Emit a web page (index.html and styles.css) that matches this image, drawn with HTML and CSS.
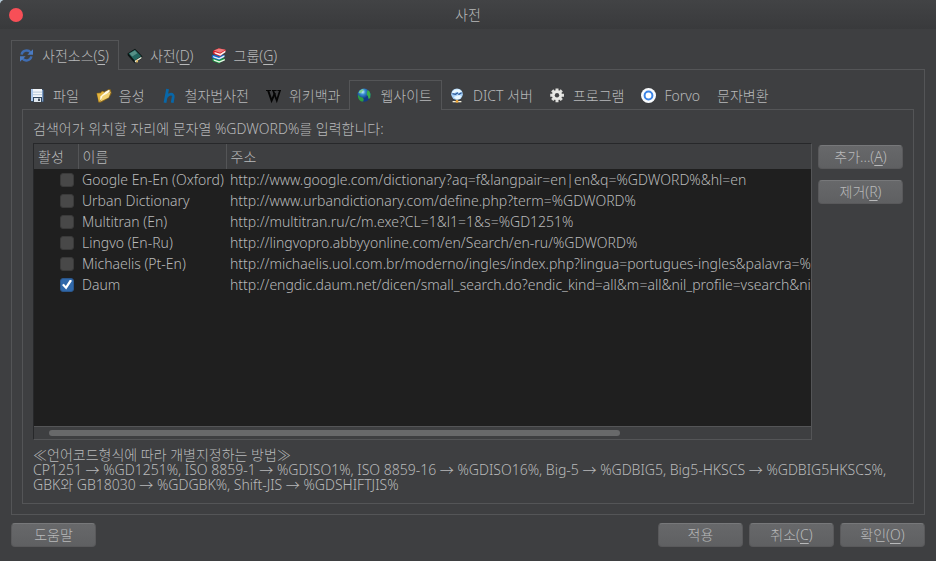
FILE: index.html
```html
<!DOCTYPE html>
<html lang="ko">
<head>
<meta charset="utf-8">
<title>사전</title>
<link rel="stylesheet" href="styles.css">
</head>
<body>
<main class="window">
  <header class="titlebar">
    <button class="close" type="button" aria-label="닫기"></button>
    <h1 class="title">사전</h1>
  </header>
  <div class="content">
    <nav class="tabs" role="tablist">
      <button class="tab active" type="button" role="tab" aria-selected="true">
        <svg class="icon" viewBox="0 0 16 16"><g fill="none" stroke="#3f6db3" stroke-width="2.4"><path d="M2.6 6.6C3.4 2 9.3 1.4 11.6 4.4"/><path d="M12.4 8.4C11.6 13 5.7 13.6 3.4 10.6"/></g><path d="M14 1.2v5.6H8.4z" fill="#4b7bc2"/><path d="M1 13.8V8.2h5.6z" fill="#4b7bc2"/></svg>
        <span>사전소스(<u>S</u>)</span>
      </button>
      <button class="tab" type="button" role="tab">
        <svg class="icon" viewBox="0 0 16 16"><path d="M.5 5.5 8 .8l7.3 7.4-.4 2.3L7.6 15 .8 7.6z" fill="#0b1413"/><path d="M1.6 5.6 8 1.8l6.2 6.4-6.6 4.2z" fill="#23665f"/><path d="M2.6 5.6 7.8 2.6l2.6 2.6-5.2 3.2z" fill="#569087"/><path d="m7.8 12.8 6.6-4 .2 1.4-6.6 4.2z" fill="#e9ecda"/><path d="m9.2 12.6 1.8-1.1v3.3l-1-.8-.8.9z" fill="#e0b860"/></svg>
        <span>사전(<u>D</u>)</span>
      </button>
      <button class="tab" type="button" role="tab">
        <svg class="icon" viewBox="0 0 16 16"><path d="M1.5 10.5 8 9.6l6 1.2v1L8 15.4l-6-2.2c-1-.8-1-2-.5-2.7z" fill="#12973d"/><path d="m2.5 11.2 5.7 2 5.6-2.2v1.5L8.2 14.8l-5.4-2z" fill="#e7f5e5"/><path d="M1 7.2 8 5.6l5.6 1.6v1L8 12.2l-6.4-2c-1-.8-1-2-.6-3z" fill="#1767c1"/><path d="m2 8 6 2.1 5.4-2.8v1.6L8.2 11.6l-5.8-2z" fill="#e3f2fc"/><path d="M2.5 2.5 7.8.3l7 1.4v1.1L9.3 8.6 3 6.2c-1.4-.8-1.5-2.6-.5-3.7z" fill="#d51e28"/><path d="M2.8 2.6 7.8.6l6.6 1.2-5.3 3z" fill="#f07b7c"/><path d="m3.4 4 5.8 1.8 5.2-3.2v1.7L9.3 7.8 3.8 5.6z" fill="#fff0ec"/></svg>
        <span>그룹(<u>G</u>)</span>
      </button>
    </nav>
    <section class="pane outer">
      <nav class="tabs inner-tabs" role="tablist">
        <button class="tab" type="button" role="tab">
          <svg class="icon" viewBox="0 0 16 16"><path d="M1 1h12l1 1v12H2l-1-1z" fill="#33485f"/><path d="M1 1h2v12H1z" fill="#a9c6ea"/><path d="M12 2h1.2v11.5H12z" fill="#7d9bc4"/><path d="M3 1h9v8H3z" fill="#f3f6fa"/><path d="M3 3.6h9v1.2H3zM3 6h9v1.2H3z" fill="#c3d2e0"/><path d="M4 10h7v4H4z" fill="#dfe7ee"/><path d="M8 10.6h2V13H8z" fill="#46515e"/></svg>
          <span>파일</span>
        </button>
        <button class="tab" type="button" role="tab">
          <svg class="icon" viewBox="0 0 16 16"><path d="m.4 5 4-.4L6 3l2 .4L13 1l1.8.6.8 4L13 10l-8 4.6-2.4.2z" fill="#8a661a"/><path d="m1 5.6 3.8-.4L6 3.6l2.4.4-4.6 9.6-1 .4z" fill="#e3b53f"/><path d="m4.4 8.4 5-4.6L13 1.8l1 1.2-6 7-4 2z" fill="#fffbe6"/><path d="M4 13.8 6.6 8l8.4-4.4-2.4 5.8z" fill="#f2d274"/></svg>
          <span>음성</span>
        </button>
        <button class="tab" type="button" role="tab">
          <svg class="icon" viewBox="0 0 16 16"><path d="M5.6 1 3 14.7M4.4 9C6.8 5.6 11.8 5 11.2 9l-1 5.7" fill="none" stroke="#0867a8" stroke-width="2.8"/></svg>
          <span>철자법사전</span>
        </button>
        <button class="tab" type="button" role="tab">
          <svg class="icon" viewBox="0 0 16 16"><path d="M0 2.5h5M6 2.5h4.6M11.4 2.5H15" stroke="#050505"/><path d="m2.2 2.6 3.4 10L9 5" fill="none" stroke="#050505" stroke-width="1.9"/><path d="m7.2 2.6 3.6 10 3.2-10" fill="none" stroke="#050505" stroke-width="1.7"/></svg>
          <span>위키백과</span>
        </button>
        <button class="tab active" type="button" role="tab" aria-selected="true">
          <svg class="icon" viewBox="0 0 16 16"><defs><radialGradient id="globe" cx=".4" cy=".25"><stop stop-color="#c8f3ff"/><stop offset=".4" stop-color="#388fd3"/><stop offset="1" stop-color="#123a89"/></radialGradient></defs><circle cx="7" cy="7.2" r="6.6" fill="url(#globe)"/><path d="M1.6 4.4 3 2.4 6 1l.6 1.2-1.4 1.6-2 1.6z" fill="#7fd08a"/><path d="M1 6.4 3 8.8l3 1 .8 1.6-.6 2.2C3 13.6.4 10.6 1 6.4z" fill="#2f9c3f"/><path d="m10.4 2.2 1.8.8 1.4 3-.4 4-1.6 1-.8-3-1.2-1.6z" fill="#3aac4c"/></svg>
          <span>웹사이트</span>
        </button>
        <button class="tab" type="button" role="tab">
          <svg class="icon" viewBox="0 0 16 16"><circle cx="7" cy="6.2" r="5.8" fill="#a5d0f8"/><path d="M2 4 4.6 1.6l4.4-.4 3 2.6-3 1-2.6-1L3 6zM3.6 9l5-2 3 1-2 3H6z" fill="#eaf8ff"/><path d="m2.4 5.6 3 .8 2.6-1.6M8.4 6.6l3.2-1.8" fill="none" stroke="#2c5796" stroke-width="1.3"/><path d="M6.3 11.6h1.4v2H6.3z" fill="#d8c8a0"/><path d="M2.6 13h8.8v1.3H2.6z" fill="#f4efdc"/><circle cx="7" cy="13.4" r="1.4" fill="#e9a133"/></svg>
          <span>DICT 서버</span>
        </button>
        <button class="tab" type="button" role="tab">
          <svg class="icon" viewBox="0 0 16 16"><g stroke="#dededb" stroke-width="3"><path d="M7 .4v13.8M.2 7.2H14M2.2 2.4l9.6 9.6M11.8 2.4 2.2 12"/></g><circle cx="7" cy="7.2" r="5" fill="#e8e8e5"/><circle cx="7" cy="7.2" r="2.2" fill="#434446"/></svg>
          <span>프로그램</span>
        </button>
        <button class="tab" type="button" role="tab">
          <svg class="icon" viewBox="0 0 16 16"><circle cx="7.5" cy="7.5" r="7.5" fill="#f9fbfd"/><circle cx="7.5" cy="7.5" r="3.9" fill="#fff" stroke="#3b84e6" stroke-width="2"/></svg>
          <span>Forvo</span>
        </button>
        <button class="tab" type="button" role="tab"><span>문자변환</span></button>
      </nav>
      <section class="pane inner">
        <p class="hint">검색어가 위치할 자리에 문자열 %GDWORD%를 입력합니다:</p>
        <div class="editor">
          <div class="list">
            <div class="viewport">
              <table class="sites">
                <colgroup><col class="c-on"><col class="c-name"><col></colgroup>
                <thead><tr><th>활성</th><th>이름</th><th>주소</th></tr></thead>
                <tbody>
                  <tr><td><input type="checkbox" aria-label="Google En-En (Oxford)"></td><td>Google En-En (Oxford)</td><td>http://www.google.com/dictionary?aq=f&amp;langpair=en|en&amp;q=%GDWORD%&amp;hl=en</td></tr>
                  <tr><td><input type="checkbox" aria-label="Urban Dictionary"></td><td>Urban Dictionary</td><td>http://www.urbandictionary.com/define.php?term=%GDWORD%</td></tr>
                  <tr><td><input type="checkbox" aria-label="Multitran (En)"></td><td>Multitran (En)</td><td>http://multitran.ru/c/m.exe?CL=1&amp;l1=1&amp;s=%GD1251%</td></tr>
                  <tr><td><input type="checkbox" aria-label="Lingvo (En-Ru)"></td><td>Lingvo (En-Ru)</td><td>http://lingvopro.abbyyonline.com/en/Search/en-ru/%GDWORD%</td></tr>
                  <tr><td><input type="checkbox" aria-label="Michaelis (Pt-En)"></td><td>Michaelis (Pt-En)</td><td>http://michaelis.uol.com.br/moderno/ingles/index.php?lingua=portugues-ingles&amp;palavra=%G</td></tr>
                  <tr><td><input type="checkbox" aria-label="Daum" checked></td><td>Daum</td><td>http://engdic.daum.net/dicen/small_search.do?endic_kind=all&amp;m=all&amp;nil_profile=vsearch&amp;nil_</td></tr>
                </tbody>
              </table>
            </div>
            <div class="scrollbar"><div class="thumb"></div></div>
          </div>
          <div class="side">
            <button class="btn" type="button">추가...(<u>A</u>)</button>
            <button class="btn" type="button">제거(<u>R</u>)</button>
          </div>
        </div>
        <p class="notes">≪언어코드형식에 따라 개별지정하는 방법≫<br>CP1251 → %GD1251%, ISO 8859-1 → %GDISO1%, ISO 8859-16 → %GDISO16%, Big-5 → %GDBIG5, Big5-HKSCS → %GDBIG5HKSCS%,<br>GBK와 GB18030 → %GDGBK%, Shift-JIS → %GDSHIFTJIS%</p>
      </section>
    </section>
    <footer class="actions">
      <button class="btn help" type="button">도움말</button>
      <button class="btn" type="button">적용</button>
      <button class="btn" type="button">취소(<u>C</u>)</button>
      <button class="btn" type="button">확인(<u>O</u>)</button>
    </footer>
  </div>
</main>
</body>
</html>
```
FILE: styles.css
```css
* { box-sizing: border-box; }
body {
  margin: 0;
  background: #b4c8d4;
  color: #b8b9ba;
  font: 300 14px/20px "Noto Sans", "Noto Sans CJK KR", sans-serif;
}
button { font: inherit; color: inherit; }
p, h1 { margin: 0; }
u { text-underline-offset: 3px; }
.window {
  display: flex;
  flex-direction: column;
  min-height: 100vh;
  background: #3e3f41;
  border-radius: 5px 0 0 0;
}
.titlebar {
  display: grid;
  grid-template-columns: 32px 1fr 32px;
  align-items: center;
  height: 29px;
  background: linear-gradient(#424345, #393a3c);
  border-radius: 5px 0 0 0;
}
.close {
  width: 14px;
  height: 14px;
  padding: 0;
  margin-left: 9px;
  border: 0;
  border-radius: 50%;
  background: #f74f57;
}
.title { font-size: 14px; font-weight: 300; text-align: center; }
.content {
  flex: 1;
  display: flex;
  flex-direction: column;
  padding: 11px 11px 14px;
}
.tabs { display: flex; height: 30px; margin-bottom: -1px; }
.tab {
  display: flex;
  align-items: center;
  gap: 7px;
  padding: 2px 9px 0 8px;
  border: 0;
  background: none;
  white-space: nowrap;
}
.tab.active {
  position: relative;
  padding: 0 9px 0 7px;
  border: 1px solid #545557;
  border-bottom: 0;
  background: #3e3f41;
}
.icon { width: 16px; height: 16px; flex: none; }
.pane { flex: 1; display: flex; flex-direction: column; border: 1px solid #545557; }
.outer { padding: 10px; }
.inner { padding: 9px 10px 11px; }
.hint { margin-bottom: 4px; }
.editor { flex: 1; display: flex; gap: 6px; }
.list {
  flex: 1;
  min-width: 0;
  display: flex;
  flex-direction: column;
  border: 1px solid #545557;
  border-top-color: #27282a;
  border-left-color: #27282a;
}
.viewport { flex: 1; overflow: hidden; background: #1f1f1f; }
.sites { width: 100%; table-layout: fixed; border-collapse: collapse; white-space: nowrap; }
.c-on { width: 44px; }
.c-name { width: 148px; }
.sites th {
  height: 25px;
  padding: 0 4px;
  background: #3e3f41;
  border-right: 1px solid #545557;
  font-weight: 300;
  text-align: left;
}
.sites th:last-child { border-right: 0; }
.sites td { height: 21px; padding: 0 0 0 4px; }
.sites td:first-child { padding-left: 26px; }
.sites input {
  appearance: none;
  display: grid;
  place-items: center;
  width: 14px;
  height: 14px;
  margin: 0;
  border: 1px solid #3a3a3a;
  border-radius: 3px;
  background: #484848;
}
.sites input:checked { border-color: #2a568b; background: #3068aa; }
.sites input:checked::before {
  content: "";
  width: 10px;
  height: 10px;
  background: #fff;
  clip-path: polygon(0 55%, 18% 42%, 38% 66%, 80% 0, 100% 12%, 42% 100%);
}
.scrollbar {
  height: 13px;
  padding: 3px 191px 0 15px;
  border-top: 1px solid #545557;
}
.thumb { height: 6px; border-radius: 3px; background: #68696a; }
.side { display: flex; flex-direction: column; gap: 11px; padding-top: 2px; }
.btn {
  width: 85px;
  height: 24px;
  padding: 0;
  border: 1px solid #59595b;
  border-top-color: #77787a;
  border-radius: 4px;
  background: linear-gradient(#67686a, #5f6062);
}
.notes { margin-top: 7px; line-height: 15px; }
.actions { display: flex; gap: 6px; margin-top: 8px; }
.help { margin-right: auto; }
```
